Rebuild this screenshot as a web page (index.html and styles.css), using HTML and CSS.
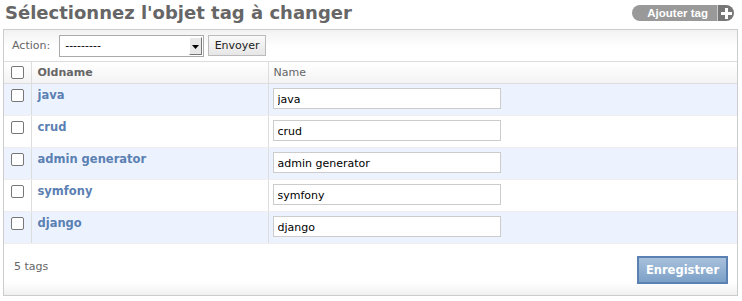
FILE: index.html
```html
<!DOCTYPE html>
<html lang="fr">
<head>
<meta charset="utf-8">
<title>Sélectionnez l'objet tag à changer</title>
<link rel="stylesheet" href="styles.css">
</head>
<body>
<div class="content">
  <div class="top">
    <h1>Sélectionnez l'objet tag à changer</h1>
    <a class="addlink" href="#"><span class="addtext">Ajouter tag</span><span class="addplus"><svg width="11" height="11" viewBox="0 0 11 11"><path d="M4 0h3v4h4v3H7v4H4V7H0V4h4z" fill="#fff"/></svg></span></a>
  </div>
  <div class="module">
    <div class="actions">
      <label class="action-label">Action:</label>
      <span class="select-wrap"><select class="action-select"><option>---------</option></select></span>
      <button class="go" type="button">Envoyer</button>
    </div>
    <table class="results">
      <colgroup>
        <col class="col-check">
        <col class="col-old">
        <col class="col-name">
      </colgroup>
      <thead>
        <tr>
          <th class="c-check"><input type="checkbox" class="cb"></th>
          <th class="c-old">Oldname</th>
          <th class="c-name">Name</th>
        </tr>
      </thead>
      <tbody>
        <tr class="row1"><td class="c-check"><input type="checkbox" class="cb"></td><td class="c-old"><a href="#">java</a></td><td class="c-name"><input class="txt" type="text" value="java"></td></tr>
        <tr class="row2"><td class="c-check"><input type="checkbox" class="cb"></td><td class="c-old"><a href="#">crud</a></td><td class="c-name"><input class="txt" type="text" value="crud"></td></tr>
        <tr class="row1"><td class="c-check"><input type="checkbox" class="cb"></td><td class="c-old"><a href="#">admin generator</a></td><td class="c-name"><input class="txt" type="text" value="admin generator"></td></tr>
        <tr class="row2"><td class="c-check"><input type="checkbox" class="cb"></td><td class="c-old"><a href="#">symfony</a></td><td class="c-name"><input class="txt" type="text" value="symfony"></td></tr>
        <tr class="row1"><td class="c-check"><input type="checkbox" class="cb"></td><td class="c-old"><a href="#">django</a></td><td class="c-name"><input class="txt" type="text" value="django"></td></tr>
      </tbody>
    </table>
    <div class="paginator">
      <span class="count">5 tags</span>
      <button class="save" type="button">Enregistrer</button>
    </div>
  </div>
</div>
</body>
</html>
```
FILE: styles.css
```css
html, body {
  margin: 0;
  padding: 0;
  background: #fff;
}
body {
  font-family: "DejaVu Sans", Verdana, sans-serif;
  font-size: 12px;
  color: #333;
}
.content {
  padding: 2px 4px 0 3px;
}
.top {
  display: flex;
  justify-content: space-between;
  align-items: flex-start;
  height: 27px;
}
h1 {
  margin: 0 0 0 2px;
  font-size: 18px;
  line-height: 22px;
  font-weight: bold;
  color: #666;
}
.addlink {
  display: flex;
  margin-top: 3px;
  margin-right: 4px;
  height: 16px;
  text-decoration: none;
  font-family: "Liberation Sans", Arial, sans-serif;
  font-weight: bold;
  font-size: 11.5px;
  color: #fff;
}
.addtext {
  background: #999;
  border-radius: 8px 0 0 8px;
  padding: 0 9px 0 15px;
  line-height: 16px;
}
.addplus {
  display: flex;
  align-items: center;
  justify-content: center;
  width: 16px;
  background: #777;
  border-left: 1px solid #ccc;
  border-radius: 0 8px 8px 0;
}
.module {
  border: 1px solid #ccc;
}
.actions {
  display: flex;
  align-items: center;
  height: 31px;
  padding: 0 0 0 8px;
  border-bottom: 1px solid #ddd;
  background: linear-gradient(#f2f2f2, #fff 55%);
}
.action-label {
  font-size: 11px;
  color: #666;
  margin-right: 9px;
}
.select-wrap {
  position: relative;
  display: inline-block;
  width: 145px;
  height: 22px;
}
.action-select {
  appearance: none;
  -webkit-appearance: none;
  width: 145px;
  height: 22px;
  margin: 0;
  padding: 0 0 0 5px;
  border: 1px solid #aaa;
  border-radius: 0;
  background: #fff;
  font-family: "DejaVu Sans", sans-serif;
  font-size: 11px;
  color: #000;
}
.select-wrap::after {
  content: "";
  position: absolute;
  right: 2px;
  top: 2px;
  width: 13px;
  height: 18px;
  border: 1px solid;
  border-color: #fff #777 #777 #fff;
  background: #e8e8e8 url("data:image/svg+xml,%3Csvg xmlns='http://www.w3.org/2000/svg' width='11' height='16'%3E%3Cpath d='M2 7h7l-3.5 4z' fill='%23000'/%3E%3C/svg%3E") no-repeat center;
  box-sizing: border-box;
  pointer-events: none;
}
.go {
  margin-left: 4px;
  height: 21px;
  width: 58px;
  padding: 0;
  border: 1px solid #bbb;
  border-radius: 0;
  background: linear-gradient(#fafafa, #e6e6e6);
  font-family: "DejaVu Sans", sans-serif;
  font-size: 11px;
  color: #222;
}
.results {
  width: 100%;
  border-collapse: collapse;
  table-layout: fixed;
}
.col-check {
  width: 27px;
}
.col-old {
  width: 237px;
}
.results th,
.results td {
  box-sizing: border-box;
}
.results th {
  height: 21px;
  padding: 0 5px;
  text-align: left;
  font-size: 11px;
  color: #666;
  font-weight: bold;
  border-bottom: 1px solid #ddd;
  background: linear-gradient(#fff, #f3f3f3);
  vertical-align: middle;
}
.results th.c-name {
  font-weight: normal;
}
.results th.c-old, .results td.c-old,
.results th.c-name, .results td.c-name {
  border-left: 1px solid #ddd;
}
.results td {
  height: 32px;
  padding: 4px 4px 5px;
  vertical-align: top;
  border-bottom: 1px solid #eee;
  font-size: 11px;
  line-height: 13px;
}
.results td.c-old {
  padding-left: 6px;
  padding-top: 5px;
}
.results td.c-check {
  padding: 5px 0 0 7px;
}
.results th.c-check {
  padding: 0 0 0 7px;
}
.results th.c-old {
  padding-left: 6px;
}
.row1 td {
  background: #edf3fe;
}
.row2 td {
  background: #fff;
}
.cb {
  appearance: none;
  -webkit-appearance: none;
  display: block;
  width: 13px;
  height: 13px;
  margin: 0;
  border: 1px solid #777;
  border-radius: 2px;
  background: #fff;
}
.results a {
  color: #5b80b2;
  font-weight: bold;
  font-size: 11.5px;
  text-decoration: none;
}
.txt {
  display: block;
  box-sizing: border-box;
  width: 228px;
  height: 21px;
  margin: 0;
  padding: 2px 4px 0;
  border: 1px solid #ccc;
  font-family: "DejaVu Sans", sans-serif;
  font-size: 11px;
  color: #000;
  background: #fff;
}
.paginator {
  display: flex;
  justify-content: space-between;
  align-items: flex-start;
  height: 51px;
  padding: 12px 9px 0 10px;
  box-sizing: border-box;
  background: linear-gradient(#fff 75%, #f0f0f0);
}
.count {
  margin-top: 4px;
  font-size: 11px;
  color: #666;
  line-height: 13px;
}
.save {
  width: 91px;
  height: 28px;
  padding: 0;
  border: 2px solid #5b80b2;
  border-radius: 0;
  background: linear-gradient(#a8c1dc, #7ca0c7);
  color: #fff;
  font-family: "DejaVu Sans", sans-serif;
  font-weight: bold;
  font-size: 11.5px;
}
```
